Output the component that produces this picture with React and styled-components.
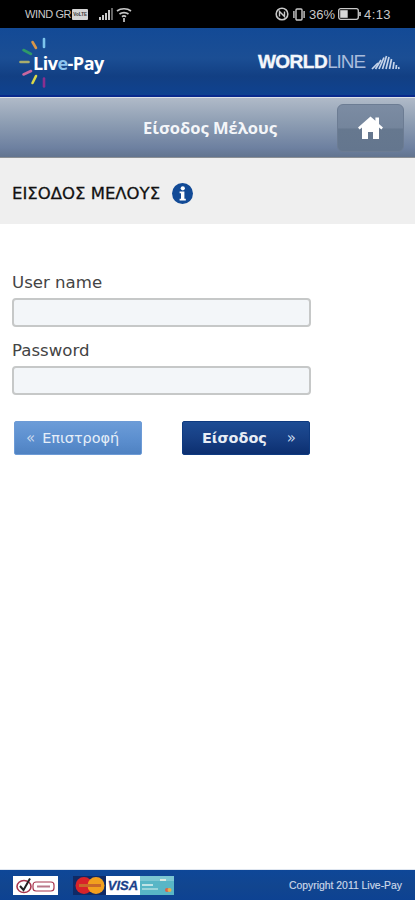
import React from "react";
import styled, { createGlobalStyle } from "styled-components";

const GlobalStyle = createGlobalStyle`
  html, body {
    margin: 0;
    padding: 0;
    background: #fff;
  }
  * {
    box-sizing: border-box;
  }
`;

const Page = styled.div`
  width: 415px;
  height: 900px;
  display: flex;
  flex-direction: column;
  background: #fff;
  font-family: "DejaVu Sans", "Liberation Sans", sans-serif;
  overflow: hidden;
`;

const StatusBar = styled.div`
  height: 28px;
  flex: none;
  display: flex;
  align-items: center;
  justify-content: space-between;
  padding: 0 24px 0 25px;
  background: #000;
  color: #c9c9c9;
`;

const StatusGroup = styled.div`
  display: flex;
  align-items: center;
  gap: 3px;
`;

const Carrier = styled.span`
  font-family: "Liberation Sans", sans-serif;
  font-size: 11px;
  letter-spacing: -0.4px;
`;

const Tag = styled.span`
  width: 16px;
  height: 11px;
  margin-left: -2px;
  margin-right: 8px;
  overflow: hidden;
  font-family: "Liberation Sans", sans-serif;
  font-size: 4.5px;
  font-weight: 700;
  line-height: 11px;
  text-align: center;
  background: #d5d5d5;
  color: #333;
  border-radius: 1px;
`;

const StatusText = styled.span`
  font-family: "Liberation Sans", sans-serif;
  font-size: 13px;
  letter-spacing: ${(p) => p.$spacing || 0}px;
`;

const Header = styled.header`
  height: 69px;
  flex: none;
  display: flex;
  align-items: center;
  justify-content: space-between;
  padding: 0 15px 0 18px;
  background: linear-gradient(180deg, #134a96 0%, #1b4e94 45%, #123f83 72%, #0f4290 100%);
  border-bottom: 2px solid #0a2a8c;
`;

const LiveLogo = styled.div`
  display: flex;
  align-items: center;
`;

const LiveText = styled.span`
  margin: 3px 0 0 -15px;
  font-family: "Open Sans", sans-serif;
  font-size: 18px;
  font-weight: 700;
  letter-spacing: -0.5px;
  color: #fff;
`;

const LiveE = styled.span`
  color: #8cc4ee;
`;

const WorldLogo = styled.div`
  display: flex;
  align-items: center;
  gap: 6px;
  color: #f4f7fb;
  font-family: "Liberation Sans", sans-serif;
  font-size: 19px;
`;

const WorldBold = styled.span`
  font-weight: 700;
  letter-spacing: -0.5px;
  -webkit-text-stroke: 0.4px #f4f7fb;
`;

const WorldThin = styled.span`
  font-weight: 400;
  color: #a9bcdc;
  letter-spacing: -1.1px;
`;

const TitleBar = styled.div`
  height: 61px;
  flex: none;
  display: grid;
  grid-template-columns: 1fr auto 1fr;
  align-items: center;
  padding: 0 11px 0 16px;
  border-top: 1px solid #dfe3e8;
  background: linear-gradient(180deg, #b0bac8 0%, #8f9fb4 40%, #6d80a0 85%, #62748f 100%);
  border-bottom: 1px solid #8b8f94;
`;

const Title = styled.h1`
  grid-column: 2;
  margin: 0;
  font-family: "Open Sans", sans-serif;
  font-size: 16.5px;
  font-weight: 700;
  color: #f4f6f9;
`;

const HomeButton = styled.button`
  grid-column: 3;
  justify-self: end;
  width: 67px;
  height: 48px;
  display: flex;
  align-items: center;
  justify-content: center;
  padding: 0;
  border: 1px solid #6c7c93;
  border-radius: 6px;
  background: linear-gradient(180deg, #7c8ca3 0%, #74859c 50%, #66788f 52%, #64768e 100%);
`;

const Section = styled.div`
  height: 66px;
  flex: none;
  display: flex;
  align-items: center;
  gap: 12px;
  padding: 4px 12px 0;
  background: #efefef;
`;

const SectionTitle = styled.h2`
  margin: 0;
  font-size: 16.5px;
  font-weight: 400;
  color: #111;
  -webkit-text-stroke: 0.3px #111;
`;

const Form = styled.form`
  flex: 1;
  display: flex;
  flex-direction: column;
  padding: 47px 0 0 12px;
`;

const Label = styled.label`
  height: 24px;
  font-size: 16.6px;
  line-height: 24px;
  color: #444;
`;

const Input = styled.input`
  display: block;
  width: 299px;
  height: 29px;
  margin: 3px 0 12px;
  border: 2px solid #c6c8c8;
  border-radius: 4px;
  background: #f3f6f9;
  outline: none;
`;

const Actions = styled.div`
  width: 296px;
  display: flex;
  justify-content: space-between;
  margin: 14px 0 0 2px;
`;

const ActionButton = styled.button`
  width: 128px;
  height: 34px;
  display: flex;
  align-items: center;
  justify-content: ${(p) => (p.$primary ? "flex-end" : "flex-start")};
  gap: ${(p) => (p.$primary ? 20 : 7)}px;
  padding: ${(p) => (p.$primary ? "0 13px 0 0" : "0 0 0 11px")};
  border: 1px solid ${(p) => (p.$primary ? "#0e3a80" : "#6d9bd6")};
  border-radius: 2px;
  background: ${(p) =>
    p.$primary
      ? "linear-gradient(180deg, #1d4c94 0%, #173f84 50%, #0c2f70 100%)"
      : "linear-gradient(180deg, #6c9cd8 0%, #5d90d0 50%, #4f82c2 100%)"};
  color: ${(p) => (p.$primary ? "#e8edf5" : "#e6eef8")};
  font-family: "DejaVu Sans", sans-serif;
  font-size: 14.4px;
  font-weight: ${(p) => (p.$primary ? 700 : 400)};
`;

const Guillemet = styled.span`
  font-size: 15px;
  font-weight: 400;
  color: #c9d8ec;
`;

const Footer = styled.footer`
  height: 31px;
  flex: none;
  display: flex;
  align-items: center;
  padding: 0 13px;
  background: linear-gradient(180deg, #0e4798 0%, #11458f 55%, #0d4292 100%);
  border-top: 1px solid #dfe6f0;
`;

const Badge = styled.div`
  width: 45px;
  height: 19px;
  margin-right: 15px;
  display: flex;
  align-items: center;
  justify-content: center;
  background: #fff;
`;

const Card = styled.div`
  width: ${(p) => p.$width}px;
  height: 19px;
  display: flex;
  align-items: center;
  justify-content: center;
  background: ${(p) => p.$bg};
`;

const VisaText = styled.span`
  font-family: "Liberation Sans", sans-serif;
  font-size: 13px;
  font-weight: 700;
  font-style: italic;
  color: #1a3f8a;
  -webkit-text-stroke: 0.3px #1a3f8a;
`;

const Copyright = styled.span`
  margin-left: auto;
  font-family: "Liberation Sans", sans-serif;
  font-size: 10.4px;
  color: #cdd9ea;
  -webkit-text-stroke: 0.15px #cdd9ea;
`;

const SignalIcon = () => (
  <svg width="14" height="12" viewBox="0 0 14 12" fill="#c9c9c9">
    <path d="M0 9h2v3H0zM3 7h2v5H3zM6 5h2v7H6zM9 2h2v10H9z" />
    <path d="M12 0h2v12h-2z" opacity="0.5" />
  </svg>
);

const WifiIcon = () => (
  <svg width="16" height="15" viewBox="0 0 16 15" fill="none" stroke="#c9c9c9" strokeWidth="1.7">
    <path d="M1 4C5 1 11 1 15 4" />
    <path d="M3.5 7C6 5.2 10 5.2 12.5 7" />
    <path d="M6 9.7C7.2 8.8 8.8 8.8 10 9.7" />
    <path d="M8 11v4" />
  </svg>
);

const NfcIcon = () => (
  <svg width="14" height="14" viewBox="0 0 14 14" fill="none" stroke="#c9c9c9">
    <circle cx="7" cy="7" r="5.8" strokeWidth="1.6" />
    <path d="M4.5 9.5v-5l5 5v-5" strokeWidth="1.4" />
  </svg>
);

const VibrateIcon = () => (
  <svg width="14" height="13" viewBox="0 0 14 13" fill="#c9c9c9">
    <rect x="4" y="1" width="6" height="11" rx="1" fill="none" stroke="#c9c9c9" strokeWidth="1.4" />
    <path d="M1.2 3h1.4v7H1.2zM11.4 3h1.4v7h-1.4z" />
  </svg>
);

const BatteryIcon = () => (
  <svg width="23" height="12" viewBox="0 0 23 12">
    <rect x="0.7" y="0.7" width="19.6" height="10.6" rx="2" fill="none" stroke="#c9c9c9" strokeWidth="1.3" />
    <rect x="2.2" y="2.2" width="7.5" height="7.6" fill="#d8d8d8" />
    <rect x="21.2" y="4" width="1.6" height="4" fill="#c9c9c9" />
  </svg>
);

const LiveRays = () => (
  <svg width="30" height="52" viewBox="0 0 30 52" strokeLinecap="round" strokeWidth="2.6" fill="none">
    <path d="M26 3v8" stroke="#7cc4ec" />
    <path d="M14.5 6l3.5 6" stroke="#d99648" />
    <path d="M5.5 14l7.5 4" stroke="#2f9a68" />
    <path d="M2.5 26h8" stroke="#a9ad6c" />
    <path d="M5.5 38.5l7.5-3.5" stroke="#c9679f" />
    <path d="M14.5 47l3.5-7" stroke="#d9d84a" />
    <path d="M26 42.5v8" stroke="#8a2f8f" />
  </svg>
);

const WorldMark = () => (
  <svg width="29" height="16" viewBox="0 0 29 16" fill="none" stroke="#c6d4ea" strokeWidth="1.7">
    <path d="M1 15L7 9" />
    <path d="M4.5 15L10 6" />
    <path d="M8 15L13 3.5" />
    <path d="M11.5 15L15.5 2" />
    <path d="M15 15L18 3" />
    <path d="M18.5 15L20.5 5" />
    <path d="M22 15L23 8" />
    <path d="M25 15L25.5 11" />
    <path d="M28 15L27.5 13" />
  </svg>
);

const HomeIcon = () => (
  <svg width="25" height="23" viewBox="0 0 25 23" fill="#fff">
    <path d="M12.5 0.5L0 11.5l1.6 2 2.4-2V23h6v-7h5v7h6V11.500l2.400 2 1.600-2-4-3.500V1.500h-3.600v3.300z" />
  </svg>
);

const InfoIcon = () => (
  <svg width="21" height="21" viewBox="0 0 21 21">
    <circle cx="10.5" cy="10.5" r="10.5" fill="#124a96" />
    <circle cx="10.8" cy="5.3" r="2.1" fill="#fff" />
    <path d="M7.6 8.6h4.8v7.2h1.4v1.7H7.6v-1.7H9v-5.5H7.6z" fill="#fff" />
  </svg>
);

const CheckBadge = () => (
  <svg width="41" height="17" viewBox="0 0 41 17" fill="none">
    <ellipse cx="9" cy="9.5" rx="7" ry="6" stroke="#a8364e" strokeWidth="1.6" />
    <path d="M5 9l3.5 4L15 1.5" stroke="#222" strokeWidth="2" />
    <rect x="18" y="5" width="21" height="9" rx="3" stroke="#a8364e" strokeWidth="1.2" />
    <path d="M22 9.5h13" stroke="#b9788a" strokeWidth="2" />
  </svg>
);

const MasterIcon = () => (
  <svg width="30" height="17" viewBox="0 0 30 17">
    <circle cx="9" cy="8.5" r="8.5" fill="#d8232a" />
    <circle cx="21" cy="8.5" r="8.5" fill="#f2a01e" />
    <rect x="4" y="7" width="22" height="3" fill="#c9682a" />
  </svg>
);

const BankCard = () => (
  <svg width="34" height="19" viewBox="0 0 34 19">
    <rect width="34" height="19" fill="#58b6c6" />
    <rect width="34" height="5" fill="#7cc6d2" />
    <rect x="2" y="8" width="11" height="2" fill="#bfe3e6" />
    <rect x="2" y="12" width="16" height="2" fill="#9ad4da" />
    <circle cx="27" cy="14" r="2" fill="#d8634a" />
    <circle cx="29.5" cy="14" r="2" fill="#e6b04a" />
    <rect x="20" y="3" width="6" height="2" fill="#d8e8e0" />
  </svg>
);

const App = () => {
  return (
    <Page>
      <GlobalStyle />
      <StatusBar>
        <StatusGroup>
          <Carrier>WIND GR</Carrier>
          <Tag>VoLTE</Tag>
          <SignalIcon />
          <WifiIcon />
        </StatusGroup>
        <StatusGroup>
          <NfcIcon />
          <VibrateIcon />
          <StatusText>36%</StatusText>
          <BatteryIcon />
          <StatusText $spacing={0.4}>4:13</StatusText>
        </StatusGroup>
      </StatusBar>

      <Header>
        <LiveLogo>
          <LiveRays />
          <LiveText>
            Liv<LiveE>e</LiveE>-Pay
          </LiveText>
        </LiveLogo>
        <WorldLogo>
          <span>
            <WorldBold>WORLD</WorldBold>
            <WorldThin>LINE</WorldThin>
          </span>
          <WorldMark />
        </WorldLogo>
      </Header>

      <TitleBar>
        <Title>Είσοδος Μέλους</Title>
        <HomeButton type="button" aria-label="Home">
          <HomeIcon />
        </HomeButton>
      </TitleBar>

      <Section>
        <SectionTitle>ΕΙΣΟΔΟΣ ΜΕΛΟΥΣ</SectionTitle>
        <InfoIcon />
      </Section>

      <Form>
        <Label htmlFor="user">User name</Label>
        <Input id="user" type="text" />
        <Label htmlFor="pass">Password</Label>
        <Input id="pass" type="password" />
        <Actions>
          <ActionButton type="button">
            <Guillemet>«</Guillemet>
            Επιστροφή
          </ActionButton>
          <ActionButton type="button" $primary>
            Είσοδος
            <Guillemet>»</Guillemet>
          </ActionButton>
        </Actions>
      </Form>

      <Footer>
        <Badge>
          <CheckBadge />
        </Badge>
        <Card $width={33} $bg="#0f2a66">
          <MasterIcon />
        </Card>
        <Card $width={34} $bg="#fff">
          <VisaText>VISA</VisaText>
        </Card>
        <BankCard />
        <Copyright>Copyright 2011 Live-Pay</Copyright>
      </Footer>
    </Page>
  );
};

export default App;
